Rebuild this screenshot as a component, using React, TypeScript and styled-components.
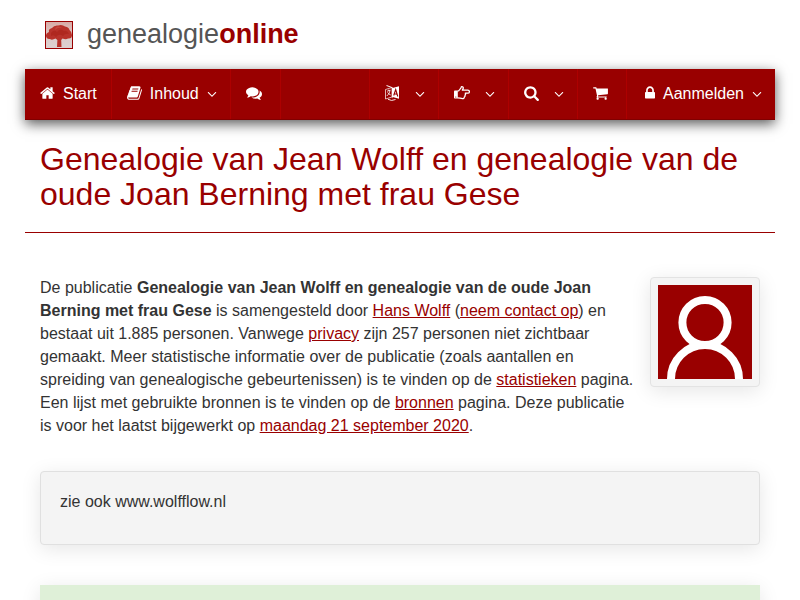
import React from "react";
import styled, { createGlobalStyle } from "styled-components";

const RED = "#990000";

const GlobalStyle = createGlobalStyle`
  *, *::before, *::after { box-sizing: border-box; }
  html { overflow: hidden; }
  body {
    margin: 0;
    background: #fff;
    color: #333;
    font-family: "Liberation Sans", Arial, Helvetica, sans-serif;
    font-size: 16px;
    line-height: 23px;
  }
`;

const Page = styled.div`
  padding: 0 25px;
`;

const Header = styled.header`
  display: flex;
  align-items: center;
  height: 69px;
  padding: 0 20px;
`;

const Brand = styled.a`
  display: flex;
  align-items: center;
  gap: 14px;
  color: #555;
  font-size: 27px;
  line-height: 30px;
  text-decoration: none;

  span { padding-bottom: 2px; }
  strong { color: ${RED}; }
  svg { display: block; }
`;

const NavBar = styled.nav`
  display: flex;
  justify-content: space-between;
  height: 51px;
  background: ${RED};
  border-bottom: 1px solid #800000;
  box-shadow: 0 4px 12px rgba(0, 0, 0, 0.65);
`;

const NavGroup = styled.div<{ $end?: boolean }>`
  display: flex;

  && > * {
    ${(p) => (p.$end ? "border-left" : "border-right")}: 1px solid #ad0000;
  }
`;

const NavLink = styled.a<{ $iconOnly?: boolean }>`
  display: flex;
  align-items: center;
  gap: 8px;
  padding: 0 ${(p) => (p.$iconOnly ? 18 : 14)}px 1px 15px;
  color: #fff;
  text-decoration: none;
`;

const buttonSpacing = {
  text: "gap: 8px; padding: 0 13px 1px 15px;",
  icon: "gap: 15px; padding: 0 13px 1px 15px;",
  account: "gap: 8px; padding: 0 13px 1px 18px;",
};

const NavButton = styled.button<{ $kind: keyof typeof buttonSpacing }>`
  display: flex;
  align-items: center;
  ${(p) => buttonSpacing[p.$kind]}
  margin: 0;
  border: 0;
  background: none;
  color: #fff;
  font: inherit;
  cursor: pointer;
`;

const Glyph = styled.svg`
  display: block;
  flex: none;
  height: 16px;
  margin-bottom: 1px;
  fill: currentColor;
`;

const Chevron = styled(Glyph)`
  margin: 1px 0 0;
`;

const Title = styled.h1`
  margin: 0;
  padding: 22px 15px 20px;
  border-bottom: 1px solid ${RED};
  color: ${RED};
  font-size: 32px;
  font-weight: 400;
  line-height: 35px;
`;

const Content = styled.main`
  padding: 43px 15px 0;
`;

const Intro = styled.section`
  display: flex;
  align-items: flex-start;
  gap: 16px;

  p { flex: 1; margin: 0; }
`;

const TextLink = styled.a`
  color: ${RED};
  text-decoration: underline;
`;

const Portrait = styled.figure`
  flex: none;
  margin: 1px 0 0;
  padding: 7px;
  background: #f4f4f4;
  border: 1px solid #e3e3e3;
  border-radius: 4px;
  box-shadow: 0 4px 20px rgba(0, 0, 0, 0.1);

  svg { display: block; }
`;

const Well = styled.section`
  margin-top: 34px;
  padding: 18px 19px 31px;
  background: #f4f4f4;
  border: 1px solid #e0e0e0;
  border-radius: 4px;
  box-shadow: 0 4px 20px rgba(0, 0, 0, 0.1);

  p { margin: 0; }
`;

const Notice = styled.section`
  margin-top: 40px;
  min-height: 60px;
  background: #dff0d8;
  box-shadow: 0 4px 20px rgba(0, 0, 0, 0.1);
`;

const icons = {
  home: { x: 64, w: 1664, px: 15, d: "M1472 992v480q0 26-19 45t-45 19h-384v-384h-256v384h-384q-26 0-45-19t-19-45v-480q0-1 .5-3t.5-3l575-474 575 474q1 2 1 6zm223-69l-62 74q-8 9-21 11h-3q-13 0-21-7l-692-577-692 577q-12 8-24 7-13-2-21-11l-62-74q-8-10-7-23.5t11-21.5l719-599q32-26 76-26t76 26l244 204v-195q0-14 9-23t23-9h192q14 0 23 9t9 23v408l219 182q10 8 11 21.5t-7 23.5z" },
  book: { x: 64, w: 1664, px: 15, d: "M1703 478q40 57 18 129l-275 906q-19 64-76.5 107.5t-122.5 43.5h-923q-77 0-148.5-53.5t-99.5-131.5q-24-67-2-127 0-4 3-27t4-37q1-8-3-21.5t-3-19.5q2-11 8-21t16.5-23.5 16.5-23.5q23-38 45-91.5t30-91.5q3-10 .5-30t-.5-28q3-11 17-28t17-23q21-36 42-92t25-90q1-9-2.5-32t.5-28q4-13 22-30.5t22-22.5q19-26 42.5-84.5t27.5-96.5q1-8-3-25.5t-2-26.5q2-8 9-18t18-23 17-21q8-12 16.5-30.5t15-35 16-36 19.5-32 26.5-23.5 36-11.5 47.5 5.5l-1 3q38-9 51-9h761q74 0 114 56t18 130l-274 906q-36 119-71.5 153.5t-128.5 34.5h-869q-27 0-38 15-11 16-1 43 24 70 144 70h923q29 0 56-15.5t35-41.5l300-987q7-22 5-57 38 15 59 43zm-1064 2q-4 13 2 22.5t20 9.5h608q13 0 25.5-9.5t16.5-22.5l21-64q4-13-2-22.5t-20-9.5h-608q-13 0-25.5 9.5t-16.5 22.5zm-83 256q-4 13 2 22.5t20 9.5h608q13 0 25.5-9.5t16.5-22.5l21-64q4-13-2-22.5t-20-9.5h-608q-13 0-25.5 9.5t-16.5 22.5z" },
  comments: { x: 0, w: 1792, px: 16, d: "M1408 768q0 139-94 257t-256.5 186.5-353.5 68.5q-86 0-176-16-124 88-278 128-36 9-86 16h-3q-11 0-20.5-8t-11.5-21q-1-3-1-6.5t.5-6.5 2-6l2.5-5 3.5-5.5 4-5 4.5-5 4-4.5q5-6 23-25t26-29.5 22.5-29 25-38.5 20.5-44q-124-72-195-177t-71-224q0-139 94-257t256.5-186.5 353.5-68.5 353.5 68.5 256.5 186.5 94 257zm384 256q0 120-71 224.5t-195 176.5q10 24 20.5 44t25 38.5 22.5 29 26 29.5 23 25q1 1 4 4.5t4.5 5 4 5 3.5 5.5l2.5 5 2 6 .5 6.5-1 6.5q-3 14-13 22t-22 7q-50-7-86-16-154-40-278-128-90 16-176 16-271 0-472-132 58 4 88 4 161 0 309-45t264-129q125-92 192-212t67-254q0-77-23-152 129 71 204 178t75 230z" },
  search: { x: 64, w: 1664, px: 15, d: "M1216 832q0-185-131.5-316.5t-316.5-131.5-316.5 131.5-131.5 316.5 131.5 316.5 316.5 131.5 316.5-131.5 131.5-316.5zm512 832q0 52-38 90t-90 38q-54 0-90-38l-343-342q-179 124-399 124-143 0-273.5-55.5t-225-150-150-225-55.5-273.5 55.5-273.5 150-225 225-150 273.5-55.5 273.5 55.5 225 150 150 225 55.5 273.5q0 220-124 399l343 343q37 37 37 90z" },
  cart: { x: 64, w: 1664, px: 15, d: "M704 1536q0 52-38 90t-90 38-90-38-38-90 38-90 90-38 90 38 38 90zm896 0q0 52-38 90t-90 38-90-38-38-90 38-90 90-38 90 38 38 90zm128-1088v512q0 24-16.5 42.5t-40.5 21.5l-1044 122q13 60 13 70 0 16-24 64h920q26 0 45 19t19 45-19 45-45 19h-1024q-26 0-45-19t-19-45q0-11 8-31.5t16-36 21.5-40 15.5-29.5l-177-823h-204q-26 0-45-19t-19-45 19-45 45-19h256q16 0 28.5 6.5t19.5 15.5 13 24.5 8 26 5.5 29.5 4.5 26h1201q26 0 45 19t19 45z" },
  lock: { x: 320, w: 1152, px: 10, d: "M640 768h512v-192q0-106-75-181t-181-75-181 75-75 181v192zm832 96v576q0 40-28 68t-68 28h-960q-40 0-68-28t-28-68v-576q0-40 28-68t68-28h32v-192q0-184 132-316t316-132 316 132 132 316v192h32q40 0 68 28t28 68z" },
};

function Icon({ name }: { name: keyof typeof icons }) {
  const { x, w, px, d } = icons[name];
  return (
    <Glyph width={px} viewBox={`${x} 0 ${w} 1792`} aria-hidden="true">
      <path d={d} />
    </Glyph>
  );
}

function DownIcon() {
  return (
    <Chevron width="10" viewBox="320 0 1152 1792" aria-hidden="true">
      <path d="M1395 736q0 13-10 23l-466 466q-10 10-23 10t-23-10l-466-466q-10-10-10-23t10-23l50-50q10-10 23-10t23 10l393 393 393-393q10-10 23-10t23 10l50 50q10 10 10 23z" />
    </Chevron>
  );
}

function HandIcon() {
  return (
    <Glyph width="16" viewBox="0 0 16 16" aria-hidden="true">
      <path d="M0.8 5.6H3.8V13.6H0.8Q0 13.6 0 12.8V6.4Q0 5.6 0.8 5.6z" />
      <circle cx="1.8" cy="12" r="0.6" fill={RED} />
      <path
        d="M3.6 6.2C5.2 6.2 5.8 4.2 6.8 3.1C7.2 2.6 7 1.7 7.8 1.7C9 1.7 9.4 2.4 9.2 3.3C9.1 4.1 8.5 4.6 8.4 5.2H13.9A1.5 1.5 0 0 1 13.9 8.2H11.3Q12 9.3 11 10.2Q11.4 11.4 10.3 12Q10.3 13.7 8.4 13.6C6.6 13.6 5.6 12.8 3.6 12.8"
        fill="none"
        stroke="currentColor"
        strokeWidth="1.3"
        strokeLinejoin="round"
      />
    </Glyph>
  );
}

function LanguageIcon() {
  return (
    <Glyph width="15" viewBox="0 0 15 16" aria-hidden="true">
      <path d="M1.5 0L7.5 2.2V13L7 13.2V3L1.5 1zM7.5 3L14 1.2V13.8L7.5 12z" />
      <path d="M0.5 4.5L7 2.5V12L0.5 14z" fill="none" stroke="currentColor" strokeWidth="0.7" />
      <path d="M2 6.2l3.5-1M3.8 4.6v1.2M5 5.6Q4.5 9 1.8 11M2.5 7.5Q4 9.5 5.8 10" fill="none" stroke="currentColor" strokeWidth="0.8" />
      <path d="M8.7 10.5L10.7 4.5L12.8 11.5M9.4 8.7L12 9.2" fill="none" stroke={RED} strokeWidth="1.1" />
      <path d="M3 14.3Q6.5 16.5 10.5 14.5" fill="none" stroke="currentColor" strokeWidth="0.9" />
    </Glyph>
  );
}

function TreeLogo() {
  return (
    <svg width="28" height="28" viewBox="0 0 28 28" aria-hidden="true">
      <defs>
        <linearGradient id="sky" x1="0" y1="0" x2="0" y2="1">
          <stop offset="0" stopColor="#d9aaa5" />
          <stop offset="0.5" stopColor="#dcc9c7" />
          <stop offset="1" stopColor="#ddd2d1" />
        </linearGradient>
      </defs>
      <rect x="0.5" y="0.5" width="27" height="27" fill="url(#sky)" stroke={RED} />
      <path d="M1 15Q0.8 12 4 11Q3 8 7 7Q9 4 13 4.5Q17 3 20 5.5Q24 6 24.5 9Q27 11 27 14Q27 18 23 17.5Q21 19 17.5 17.5L16.2 19L16.5 26H12L12.4 19L10.5 17.5Q7 19.5 5 18Q1.5 18.5 1 15z" fill="#b8322a" />
      <path d="M6 12Q9 8 12 11Q15 7 19 10Q22 9 24 13Q20 12 18 15Q14 12 11 16Q9 13 6 15z" fill="#a82219" opacity="0.6" />
      <path d="M12 5.5Q16 5 17 7Q13 6 10 9Q10 6 12 5.5z" fill="#c9473e" opacity="0.8" />
    </svg>
  );
}

export default function App() {
  return (
    <>
      <GlobalStyle />
      <Page>
        <Header>
          <Brand href="#">
            <TreeLogo />
            <span>genealogie<strong>online</strong></span>
          </Brand>
        </Header>
        <NavBar aria-label="Hoofdmenu">
          <NavGroup>
            <NavLink href="#"><Icon name="home" />Start</NavLink>
            <NavButton $kind="text" type="button"><Icon name="book" />Inhoud<DownIcon /></NavButton>
            <NavLink $iconOnly href="#" aria-label="Forum"><Icon name="comments" /></NavLink>
          </NavGroup>
          <NavGroup $end>
            <NavButton $kind="icon" type="button" aria-label="Taal"><LanguageIcon /><DownIcon /></NavButton>
            <NavButton $kind="icon" type="button" aria-label="Verwijzingen"><HandIcon /><DownIcon /></NavButton>
            <NavButton $kind="icon" type="button" aria-label="Zoeken"><Icon name="search" /><DownIcon /></NavButton>
            <NavLink $iconOnly href="#" aria-label="Winkelwagen"><Icon name="cart" /></NavLink>
            <NavButton $kind="account" type="button"><Icon name="lock" />Aanmelden<DownIcon /></NavButton>
          </NavGroup>
        </NavBar>
        <Title>Genealogie van Jean Wolff en genealogie van de oude Joan Berning met frau Gese</Title>
        <Content>
          <Intro>
            <p>
              De publicatie <strong>Genealogie van Jean Wolff en genealogie van de oude Joan Berning met frau Gese</strong> is
              samengesteld door <TextLink href="#">Hans Wolff</TextLink> (<TextLink href="#">neem contact op</TextLink>) en
              bestaat uit 1.885 personen. Vanwege <TextLink href="#">privacy</TextLink> zijn 257 personen niet zichtbaar
              gemaakt. Meer statistische informatie over de publicatie (zoals aantallen en spreiding van genealogische
              gebeurtenissen) is te vinden op de <TextLink href="#">statistieken</TextLink> pagina. Een lijst met gebruikte
              bronnen is te vinden op de <TextLink href="#">bronnen</TextLink> pagina. Deze publicatie is voor het laatst
              bijgewerkt op <TextLink href="#">maandag 21 september 2020</TextLink>.
            </p>
            <Portrait>
              <svg width="94" height="94" viewBox="0 0 94 94" role="img" aria-label="Profielfoto">
                <rect width="94" height="94" fill={RED} />
                <g fill="none" stroke="#fff" strokeWidth="8">
                  <circle cx="47" cy="37.5" r="22.6" />
                  <path d="M13 95V94a34 34 0 0 1 68 0v1" />
                </g>
              </svg>
            </Portrait>
          </Intro>
          <Well><p>zie ook www.wolfflow.nl</p></Well>
          <Notice />
        </Content>
      </Page>
    </>
  );
}
